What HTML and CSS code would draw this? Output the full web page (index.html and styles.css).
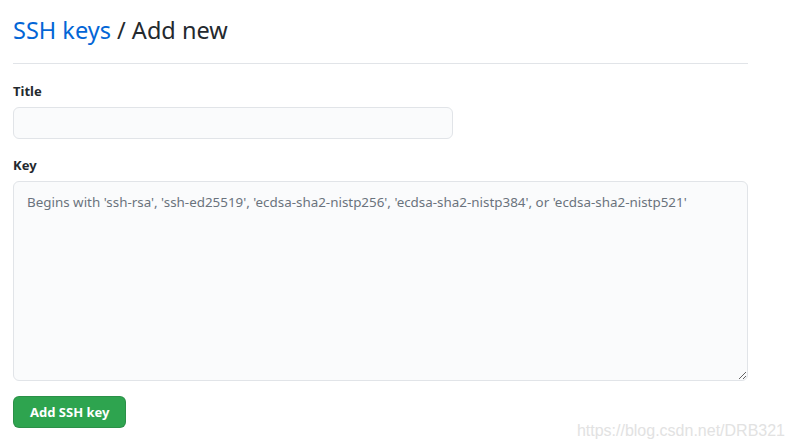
FILE: index.html
```html
<!DOCTYPE html>
<html lang="en">
<head>
<meta charset="utf-8">
<title>SSH keys / Add new</title>
<link rel="stylesheet" href="styles.css">
</head>
<body>
<div class="page">
  <div class="subhead">
    <h2 class="subhead-heading"><a class="crumb" href="#">SSH keys</a> / Add new</h2>
  </div>
  <form class="form">
    <div class="form-group">
      <label class="label" for="title">Title</label>
      <input class="input input-title" id="title" type="text">
    </div>
    <div class="form-group">
      <label class="label" for="key">Key</label>
      <textarea class="input input-key" id="key" placeholder="Begins with 'ssh-rsa', 'ssh-ed25519', 'ecdsa-sha2-nistp256', 'ecdsa-sha2-nistp384', or 'ecdsa-sha2-nistp521'"></textarea>
    </div>
    <button class="btn" type="button">Add SSH key</button>
  </form>
</div>
<div class="watermark">https://blog.csdn.net/DRB321</div>
</body>
</html>
```
FILE: styles.css
```css
html, body {
  margin: 0;
  padding: 0;
  background: #ffffff;
}
body {
  font-family: "Noto Sans", "Open Sans", sans-serif;
  color: #24292e;
  font-size: 14px;
  position: relative;
  width: 793px;
  height: 448px;
  overflow: hidden;
}
.page {
  width: 735px;
  padding: 0 13px;
}
.subhead {
  padding-top: 12px;
  padding-bottom: 15px;
  border-bottom: 1px solid #e1e4e8;
}
.subhead-heading {
  margin: 0;
  font-size: 23.5px;
  font-weight: 400;
  line-height: 36px;
  color: #24292e;
}
.crumb {
  color: #0366d6;
  text-decoration: none;
}
.form {
  display: flex;
  flex-direction: column;
  align-items: flex-start;
}
.form-group {
  display: flex;
  flex-direction: column;
  width: 100%;
  margin-top: 17px;
}
.form-group + .form-group {
  margin-top: 16px;
}
.label {
  font-weight: 700;
  font-size: 13px;
  line-height: 21px;
  margin-bottom: 5px;
}
.input {
  box-sizing: border-box;
  font-family: inherit;
  font-size: 13.4px;
  color: #24292e;
  background: #fafbfc;
  border: 1px solid #e1e4e8;
  border-radius: 6px;
  outline: none;
  margin: 0;
}
.input-title {
  width: 440px;
  height: 32px;
  padding: 5px 12px;
}
.input-key {
  width: 735px;
  height: 200px;
  padding: 10px 13px;
  line-height: 20px;
  resize: vertical;
}
.input-key::placeholder {
  color: #6a737d;
  opacity: 1;
}
.btn {
  margin-top: 15px;
  height: 32px;
  padding: 0 16px;
  box-sizing: border-box;
  font-family: inherit;
  font-size: 13px;
  font-weight: 700;
  color: #ffffff;
  background: #2ea44f;
  border: 1px solid rgba(27, 31, 35, 0.15);
  border-radius: 6px;
  cursor: pointer;
}
.watermark {
  position: absolute;
  right: 8px;
  bottom: 8px;
  font-family: "Liberation Sans", Arial, sans-serif;
  font-size: 16px;
  color: #e2e2e2;
}
```
